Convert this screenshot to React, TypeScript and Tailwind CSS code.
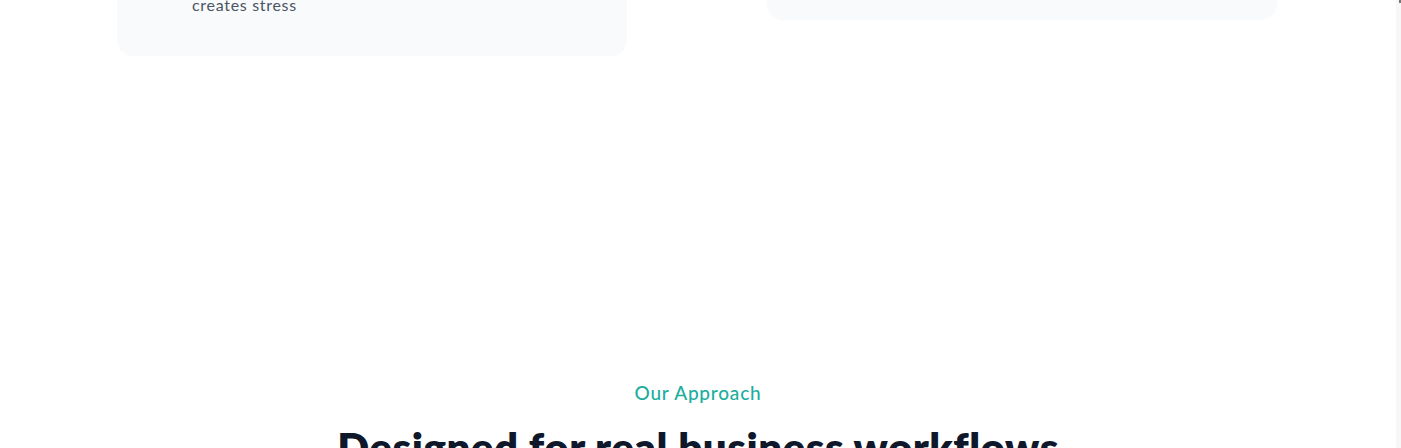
const App = () => {
  return (
    <div className="flex h-[448px] w-full overflow-hidden bg-white" style={{ fontFamily: 'Lato, "Noto Sans", sans-serif' }}>
      <main className="flex-1">
        {/* problem cards, cut off at the top */}
        <section className="-mt-[80px] ml-[117px] flex w-[1160px] items-start gap-[140px]">
          <div className="w-[510px] rounded-2xl bg-[#f9fafb] pt-[73px] pb-[39px] pl-[75px] pr-8">
            <p className="text-base leading-6 tracking-[0.7px] text-[#4b5563]">creates stress</p>
          </div>
          <div className="h-[100px] w-[510px] rounded-2xl bg-[#f9fafb]" />
        </section>

        {/* approach */}
        <section className="mt-[323px] flex flex-col items-center text-center">
          <p className="text-[19px] leading-7 font-medium tracking-[0.8px] text-[#1cae9e]">Our Approach</p>
          <h2 className="mt-[15px] text-[42px] leading-[50px] font-extrabold tracking-[0.5px] text-[#0f172a]">
            Designed for real business workflows
          </h2>
        </section>
      </main>
      <div className="w-[5px] shrink-0 bg-[#f7f7f7]">
        <div className="ml-[3px] h-[3px] w-[2px] bg-[#777777]" />
      </div>
    </div>
  );
};

export default App;
